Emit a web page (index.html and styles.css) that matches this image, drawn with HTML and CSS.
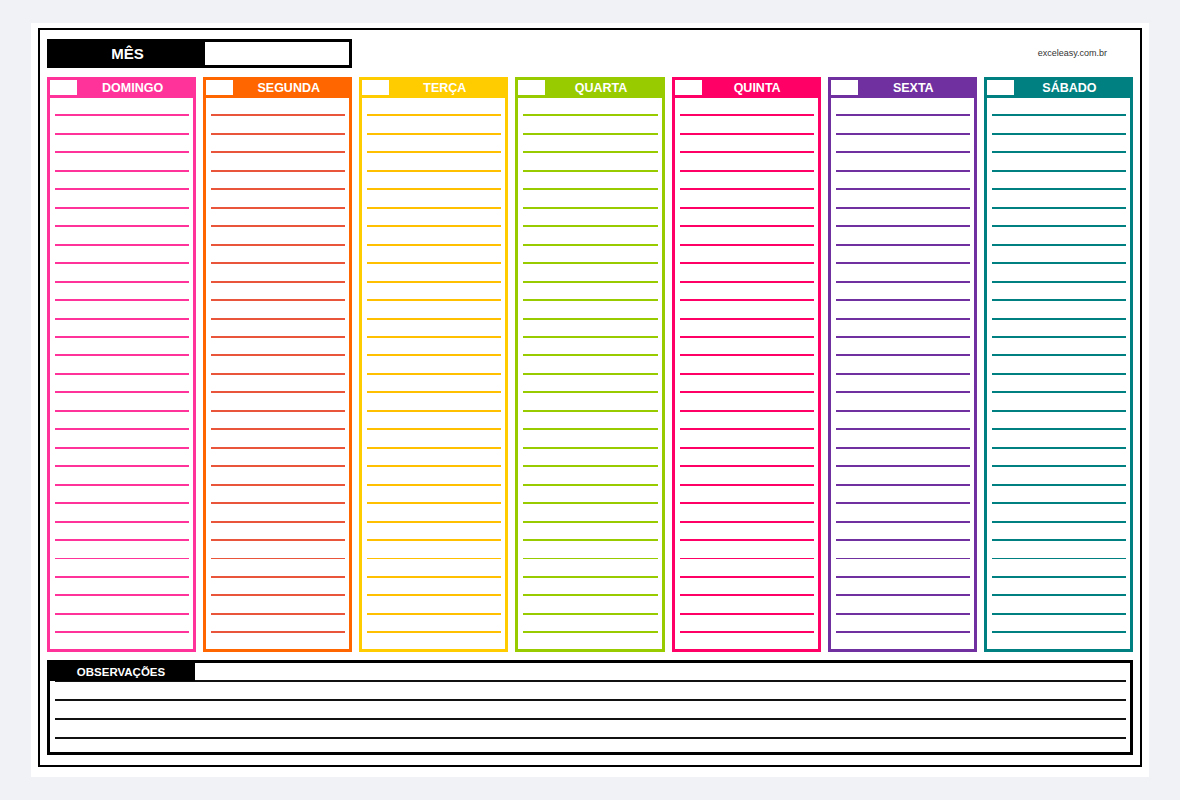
FILE: index.html
```html
<!DOCTYPE html>
<html lang="pt-BR">
<head>
<meta charset="utf-8">
<title>Planejamento semanal</title>
<link rel="stylesheet" href="styles.css">
</head>
<body>
<div class="page">
  <div class="frame">
    <div class="top">
      <div class="month">
        <span class="month-label">MÊS</span>
        <span class="month-field"></span>
      </div>
      <div class="site">exceleasy.com.br</div>
    </div>
    <div class="week">
      <div class="day day-dom">
        <div class="day-head"><span class="chk"></span><span class="day-name">DOMINGO</span></div>
        <div class="day-body"></div>
      </div>
      <div class="day day-seg">
        <div class="day-head"><span class="chk"></span><span class="day-name">SEGUNDA</span></div>
        <div class="day-body"></div>
      </div>
      <div class="day day-ter">
        <div class="day-head"><span class="chk"></span><span class="day-name">TERÇA</span></div>
        <div class="day-body"></div>
      </div>
      <div class="day day-qua">
        <div class="day-head"><span class="chk"></span><span class="day-name">QUARTA</span></div>
        <div class="day-body"></div>
      </div>
      <div class="day day-qui">
        <div class="day-head"><span class="chk"></span><span class="day-name">QUINTA</span></div>
        <div class="day-body"></div>
      </div>
      <div class="day day-sex">
        <div class="day-head"><span class="chk"></span><span class="day-name">SEXTA</span></div>
        <div class="day-body"></div>
      </div>
      <div class="day day-sab">
        <div class="day-head"><span class="chk"></span><span class="day-name">SÁBADO</span></div>
        <div class="day-body"></div>
      </div>
    </div>
    <div class="notes">
      <div class="notes-head">OBSERVAÇÕES</div>
    </div>
  </div>
</div>
</body>
</html>
```

FILE: styles.css
```css
* { box-sizing: border-box; }

html, body {
  margin: 0;
  padding: 0;
  background: #f1f2f6;
  font-family: "Liberation Sans", Arial, sans-serif;
}

.page {
  margin: 23px 0 0 31px;
  width: 1118px;
  height: 754px;
  background: #ffffff;
  padding: 5px 7px 10px 7px;
}

.frame {
  height: 100%;
  border: 2px solid #000;
  padding: 9px 7px 10px 7px;
  display: flex;
  flex-direction: column;
}

.top {
  height: 29px;
  display: flex;
  align-items: center;
  justify-content: space-between;
  margin-bottom: 9px;
}

.month {
  width: 305px;
  height: 29px;
  background: #000;
  padding: 3px 3px 3px 3px;
  display: flex;
}

.month-label {
  width: 155px;
  color: #fff;
  font-weight: bold;
  font-size: 15px;
  line-height: 23px;
  text-align: center;
}

.month-field {
  flex: 1;
  background: #fff;
}

.site {
  font-size: 9px;
  color: #333;
  margin-right: 26px;
  margin-top: -2px;
}

.week {
  height: 575px;
  display: grid;
  grid-template-columns: repeat(7, 1fr);
  column-gap: 7px;
  margin-bottom: 8px;
}

.day {
  --c: #ff3399;
  --l: #ff3399;
  border: 3px solid var(--c);
  background: var(--c);
  display: flex;
  flex-direction: column;
}

.day-head {
  height: 18px;
  display: flex;
  align-items: flex-start;
}

.chk {
  width: 27px;
  height: 15px;
  background: #fff;
  flex: none;
}

.day-name {
  flex: 1;
  padding-right: 5px;
  text-align: center;
  color: #fff;
  font-weight: bold;
  font-size: 12.5px;
  line-height: 17px;
}

.day-body {
  flex: 1;
  background-color: #fff;
  background-image: repeating-linear-gradient(to bottom, transparent 0, transparent 16.46px, var(--l) 16.46px, var(--l) 18.46px);
  background-repeat: no-repeat;
  background-position: 5px 0;
  background-size: calc(100% - 9px) 535.4px;
}

.day-dom { --c: #ff3399; --l: #ff3399; }
.day-seg { --c: #ff6600; --l: #e8553a; }
.day-ter { --c: #ffcc00; --l: #ffc000; }
.day-qua { --c: #99cc00; --l: #99cc00; }
.day-qui { --c: #ff0066; --l: #ff0066; }
.day-sex { --c: #7030a0; --l: #7030a0; }
.day-sab { --c: #008080; --l: #008080; }

.notes {
  height: 95px;
  border: 3px solid #000;
  background-color: #fff;
  background-image: repeating-linear-gradient(to bottom, transparent 0, transparent 17px, #111 17px, #111 19px);
  background-repeat: no-repeat;
  background-position: 5px 0;
  background-size: calc(100% - 9px) 76px;
}

.notes-head {
  width: 145px;
  height: 18px;
  background: #000;
  color: #fff;
  font-weight: bold;
  font-size: 11.5px;
  line-height: 18px;
  text-align: center;
  padding-right: 3px;
}
```
